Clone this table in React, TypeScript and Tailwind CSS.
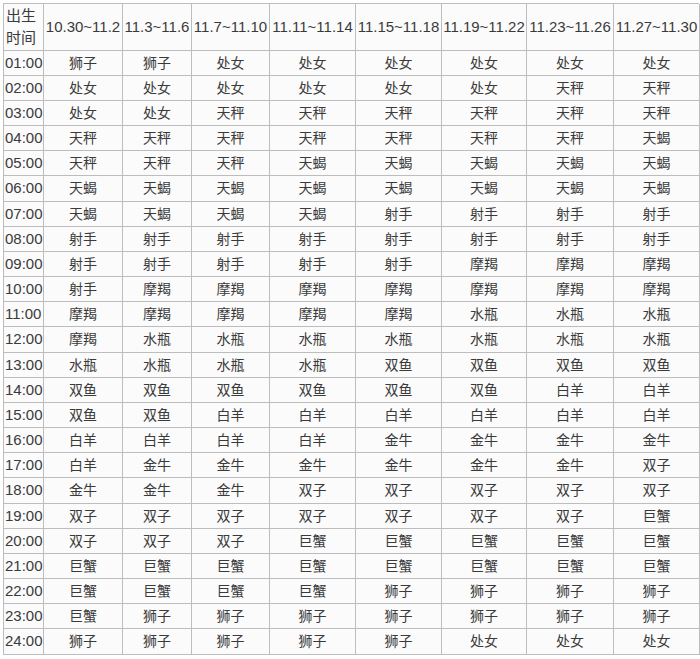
const dates = [
  "10.30~11.2",
  "11.3~11.6",
  "11.7~11.10",
  "11.11~11.14",
  "11.15~11.18",
  "11.19~11.22",
  "11.23~11.26",
  "11.27~11.30",
];

const rows: string[] = [
  "狮子 狮子 处女 处女 处女 处女 处女 处女",
  "处女 处女 处女 处女 处女 处女 天秤 天秤",
  "处女 处女 天秤 天秤 天秤 天秤 天秤 天秤",
  "天秤 天秤 天秤 天秤 天秤 天秤 天秤 天蝎",
  "天秤 天秤 天秤 天蝎 天蝎 天蝎 天蝎 天蝎",
  "天蝎 天蝎 天蝎 天蝎 天蝎 天蝎 天蝎 天蝎",
  "天蝎 天蝎 天蝎 天蝎 射手 射手 射手 射手",
  "射手 射手 射手 射手 射手 射手 射手 射手",
  "射手 射手 射手 射手 射手 摩羯 摩羯 摩羯",
  "射手 摩羯 摩羯 摩羯 摩羯 摩羯 摩羯 摩羯",
  "摩羯 摩羯 摩羯 摩羯 摩羯 水瓶 水瓶 水瓶",
  "摩羯 水瓶 水瓶 水瓶 水瓶 水瓶 水瓶 水瓶",
  "水瓶 水瓶 水瓶 水瓶 双鱼 双鱼 双鱼 双鱼",
  "双鱼 双鱼 双鱼 双鱼 双鱼 双鱼 白羊 白羊",
  "双鱼 双鱼 白羊 白羊 白羊 白羊 白羊 白羊",
  "白羊 白羊 白羊 白羊 金牛 金牛 金牛 金牛",
  "白羊 金牛 金牛 金牛 金牛 金牛 金牛 双子",
  "金牛 金牛 金牛 双子 双子 双子 双子 双子",
  "双子 双子 双子 双子 双子 双子 双子 巨蟹",
  "双子 双子 双子 巨蟹 巨蟹 巨蟹 巨蟹 巨蟹",
  "巨蟹 巨蟹 巨蟹 巨蟹 巨蟹 巨蟹 巨蟹 巨蟹",
  "巨蟹 巨蟹 巨蟹 巨蟹 狮子 狮子 狮子 狮子",
  "巨蟹 狮子 狮子 狮子 狮子 狮子 狮子 狮子",
  "狮子 狮子 狮子 狮子 狮子 处女 处女 处女",
];

const font = {
  fontFamily: '"Liberation Sans", "Noto Sans CJK SC", sans-serif',
};

export default function App() {
  return (
    <div className="min-h-[659px] bg-white pl-[3px] pt-[3px] text-[#3a3a3a]" style={font}>
      <div className="grid w-[696px] grid-cols-[40px_79px_69px_78px_86px_86px_85px_87px_86px] border-l border-t border-[#bdbdbd]">
        <div className="flex h-[47px] flex-col justify-center border-b border-r border-[#bdbdbd] bg-[#fbfbfb] pl-[2px] text-[15px] leading-[22px]">
          <span>出生</span>
          <span>时间</span>
        </div>
        {dates.map((d) => (
          <div
            key={d}
            className="flex h-[47px] items-center justify-center whitespace-nowrap border-b border-r border-[#bdbdbd] bg-[#fbfbfb] text-[15px]"
          >
            {d}
          </div>
        ))}
        {rows.map((r, i) => {
          const h = (i + 1) % 6 === 0 ? "h-[26px]" : "h-[25px]";
          const hour = String(i + 1).padStart(2, "0") + ":00";
          return [
            <div
              key={hour}
              className={`${h} flex items-center whitespace-nowrap border-b border-r border-[#bdbdbd] bg-[#fbfbfb] pl-[1px] text-[15px]`}
            >
              {hour}
            </div>,
            ...r.split(" ").map((s, j) => (
              <div
                key={hour + j}
                className={`${h} flex items-center justify-center border-b border-r border-[#bdbdbd] bg-[#fbfbfb] text-[14px]`}
              >
                {s}
              </div>
            )),
          ];
        })}
      </div>
    </div>
  );
}
